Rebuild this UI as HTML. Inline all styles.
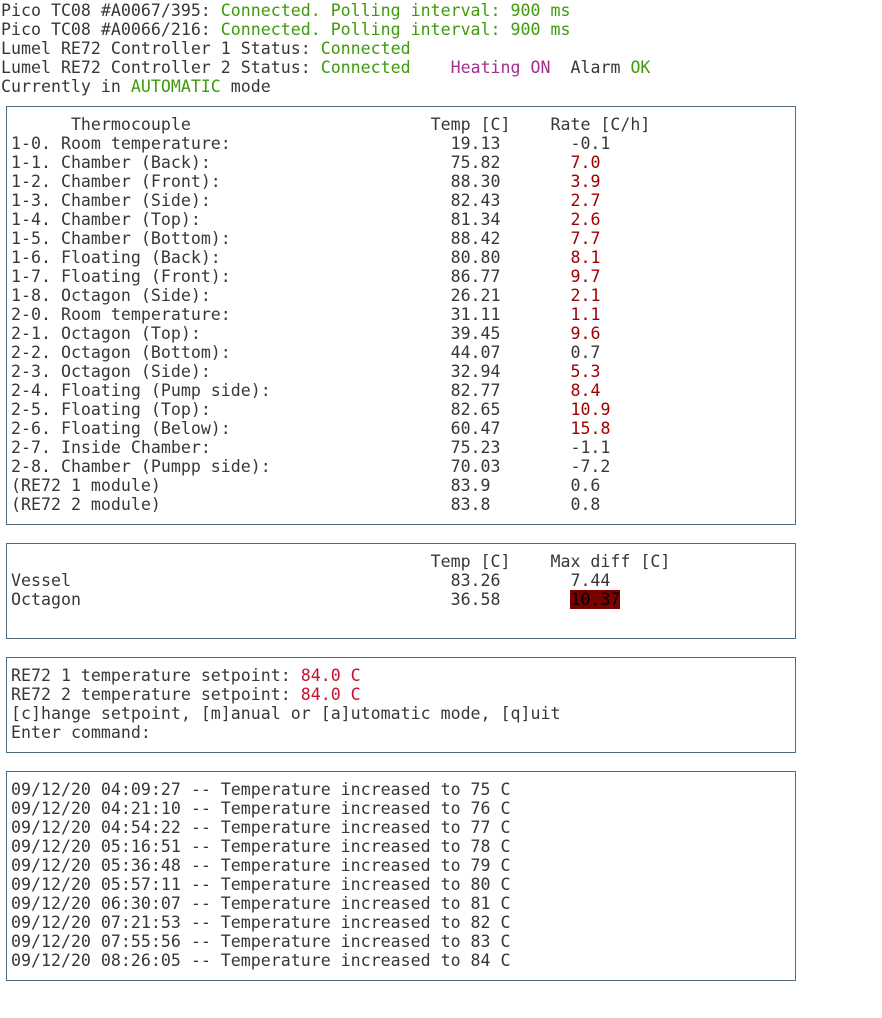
<!DOCTYPE html>
<html><head><meta charset="utf-8"><style>
body{margin:0;background:#fff;width:882px;height:1018px;overflow:hidden;position:relative}
pre{margin:0;font-family:"DejaVu Sans Mono","Liberation Mono",monospace;font-size:16.6px;line-height:19px;color:#3b3636;position:absolute;white-space:pre}
.box{position:absolute;left:6px;width:788px;border:1px solid #4f6b7c}
.g{color:#3f9a0c}.m{color:#a32f8c}.r{color:#a00000}.rr{color:#c8102e}
.hl{background:#7a0000;color:#000}
</style></head><body>
<pre style="left:1px;top:1px">Pico TC08 #A0067/395: <span class="g">Connected. Polling interval: 900 ms</span>
Pico TC08 #A0066/216: <span class="g">Connected. Polling interval: 900 ms</span>
Lumel RE72 Controller 1 Status: <span class="g">Connected</span>
Lumel RE72 Controller 2 Status: <span class="g">Connected</span>    <span class="m">Heating ON</span>  Alarm <span class="g">OK</span>
Currently in <span class="g">AUTOMATIC</span> mode</pre>
<div class="box" style="top:106px;height:417px"></div>
<pre style="left:11px;top:115px">      Thermocouple                        Temp [C]    Rate [C/h]
1-0. Room temperature:                      19.13       -0.1
1-1. Chamber (Back):                        75.82       <span class="r">7.0</span>
1-2. Chamber (Front):                       88.30       <span class="r">3.9</span>
1-3. Chamber (Side):                        82.43       <span class="r">2.7</span>
1-4. Chamber (Top):                         81.34       <span class="r">2.6</span>
1-5. Chamber (Bottom):                      88.42       <span class="r">7.7</span>
1-6. Floating (Back):                       80.80       <span class="r">8.1</span>
1-7. Floating (Front):                      86.77       <span class="r">9.7</span>
1-8. Octagon (Side):                        26.21       <span class="r">2.1</span>
2-0. Room temperature:                      31.11       <span class="r">1.1</span>
2-1. Octagon (Top):                         39.45       <span class="r">9.6</span>
2-2. Octagon (Bottom):                      44.07       0.7
2-3. Octagon (Side):                        32.94       <span class="r">5.3</span>
2-4. Floating (Pump side):                  82.77       <span class="r">8.4</span>
2-5. Floating (Top):                        82.65       <span class="r">10.9</span>
2-6. Floating (Below):                      60.47       <span class="r">15.8</span>
2-7. Inside Chamber:                        75.23       -1.1
2-8. Chamber (Pumpp side):                  70.03       -7.2
(RE72 1 module)                             83.9        0.6
(RE72 2 module)                             83.8        0.8</pre>
<div class="box" style="top:543px;height:94px"></div>
<pre style="left:11px;top:552px">                                          Temp [C]    Max diff [C]
Vessel                                      83.26       7.44
Octagon                                     36.58       <span class="hl">10.37</span></pre>
<div class="box" style="top:657px;height:94px"></div>
<pre style="left:11px;top:666px">RE72 1 temperature setpoint: <span class="rr">84.0 C</span>
RE72 2 temperature setpoint: <span class="rr">84.0 C</span>
[c]hange setpoint, [m]anual or [a]utomatic mode, [q]uit
Enter command:</pre>
<div class="box" style="top:771px;height:208px"></div>
<pre style="left:11px;top:780px">09/12/20 04:09:27 -- Temperature increased to 75 C
09/12/20 04:21:10 -- Temperature increased to 76 C
09/12/20 04:54:22 -- Temperature increased to 77 C
09/12/20 05:16:51 -- Temperature increased to 78 C
09/12/20 05:36:48 -- Temperature increased to 79 C
09/12/20 05:57:11 -- Temperature increased to 80 C
09/12/20 06:30:07 -- Temperature increased to 81 C
09/12/20 07:21:53 -- Temperature increased to 82 C
09/12/20 07:55:56 -- Temperature increased to 83 C
09/12/20 08:26:05 -- Temperature increased to 84 C</pre>
</body></html>
